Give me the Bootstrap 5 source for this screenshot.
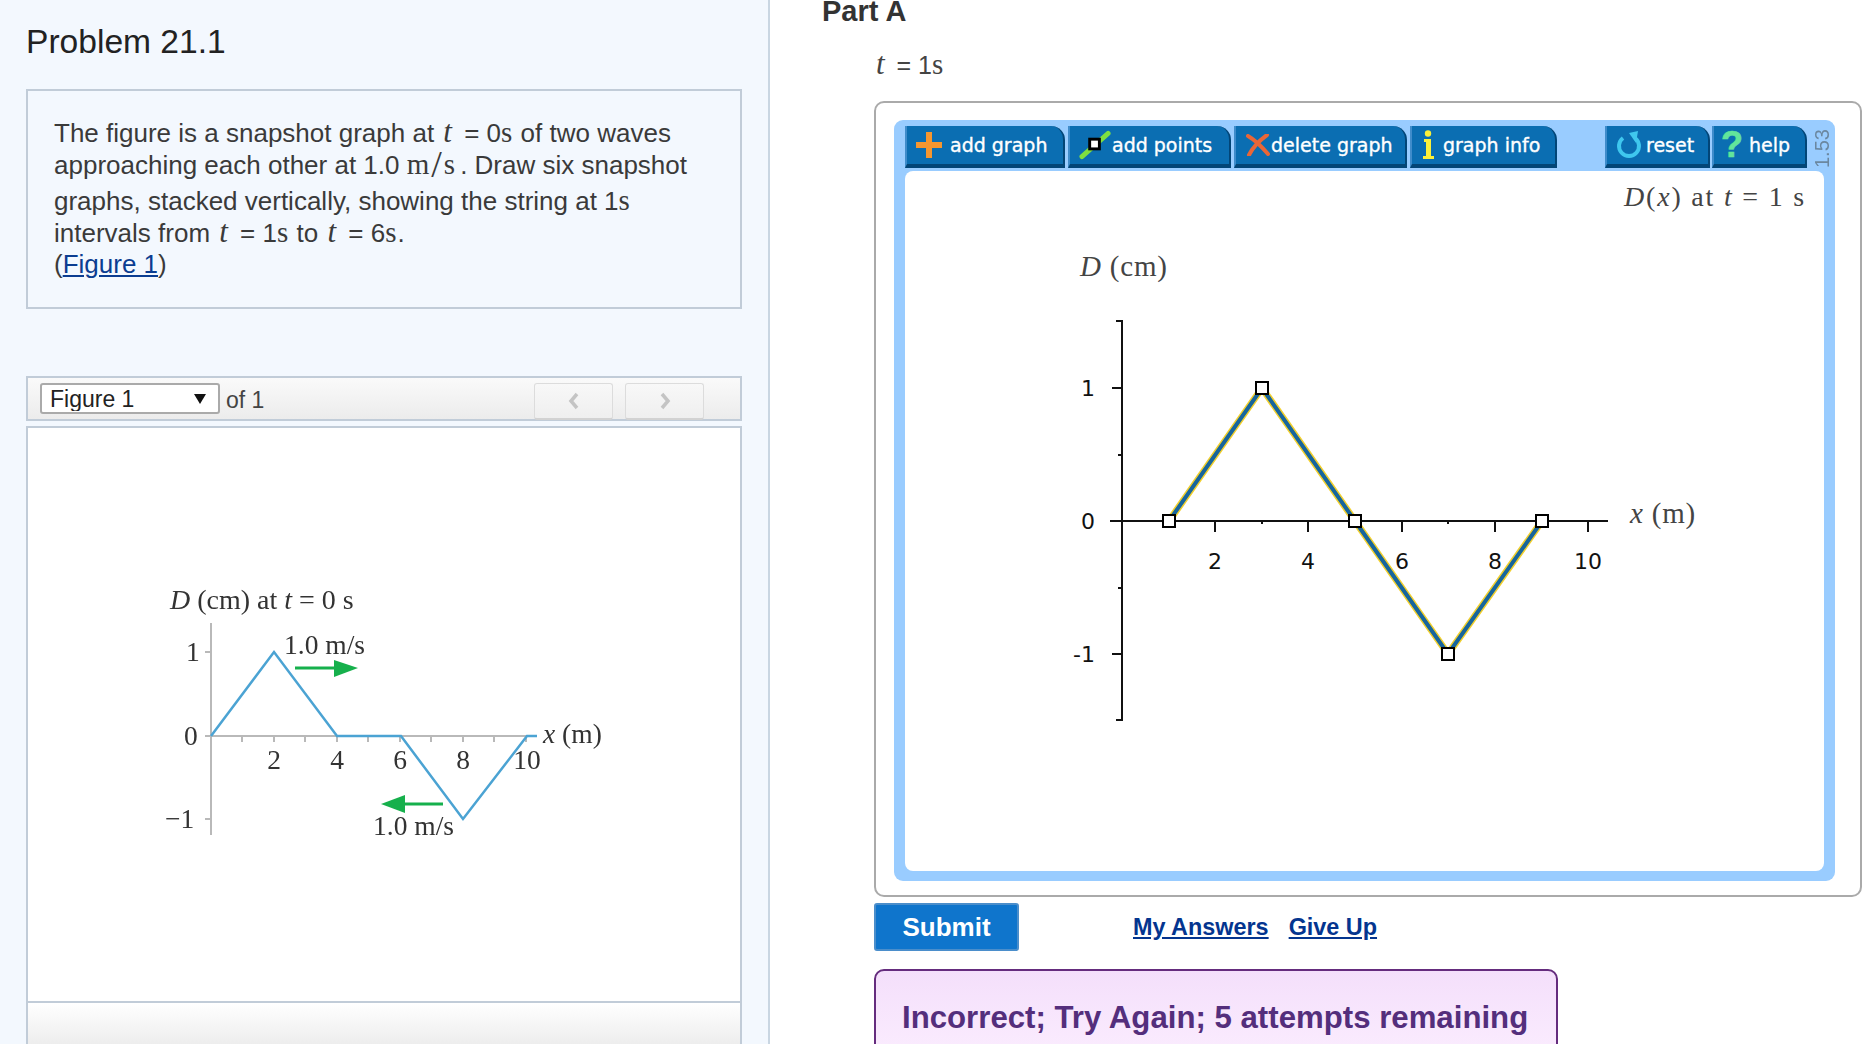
<!DOCTYPE html>
<html lang="en">
<head>
  <meta charset="UTF-8" />
  <meta name="viewport" content="width=device-width, initial-scale=1.0" />
  <title>Problem 21.1</title>
  <link rel="stylesheet" href="https://cdn.jsdelivr.net/npm/bootstrap@5.3.3/dist/css/bootstrap.min.css" />
  <style>
    html, body { height:100%; overflow:hidden; }
    body { font-family:"Liberation Sans", Arial, sans-serif; background:#fff; color:#333; }
    .page-wrap { width:1874px; height:1044px; overflow:hidden; }

    .left-pane { width:770px; height:1044px; flex:none; background:#f3f8fe; border-right:2px solid #c9d6e2; padding:0 26px 0 26px; }
    .prob-title { font-size:33.6px; font-weight:400; line-height:38px; color:#222; margin:23px 0 28px; }
    .prob-box { height:220px; border:2px solid #c1ccd8; padding:25px 26px 0; font-size:26px; margin-bottom:67px; color:#3a3a3a; }
    .prob-line { line-height:32px; height:32px; }
    .mth { font-family:"Liberation Serif", serif; font-size:29px; letter-spacing:1px; }
    i.mth { margin-right:4px; margin-left:2px; font-size:31px; }
    .unit-mth { letter-spacing:2px; margin-right:3px; }
    .big-slash { font-size:38px; font-weight:300; vertical-align:-3px; line-height:0; }
    .prob-box a, .link-fig { color:#0b3d91; }

    .fig-bar { height:45px; border:2px solid #c1ccd8; background:linear-gradient(#fafafa,#ececec); padding:5px 0 0 12px; }
    .fig-select { width:180px; height:31px; font-size:23px; line-height:1; padding:1px 0 0 8px; border:2px solid #aaa; border-radius:3px; color:#222; background-color:#fff; font-family:"Liberation Sans", Arial, sans-serif; background-size:14px 12px; background-position:right 11px center; background-image:url("data:image/svg+xml,%3Csvg xmlns='http://www.w3.org/2000/svg' viewBox='0 0 14 12'%3E%3Cpath d='M1 1h12L7 11z' fill='%23111'/%3E%3C/svg%3E"); }
    .fig-of { font-size:23px; margin-left:6px; color:#444; }
    .pager-group { gap:12px; margin-right:36px; }
    .pager-btn { width:79px; height:37px; padding:0; border:1px solid #dcdcdc; border-bottom:2px solid #d2d2d2; border-radius:3px; background:linear-gradient(#f8f8f8,#efefef); display:flex; align-items:center; justify-content:center; }
    .fig-view { height:575px; margin-top:5px; border:2px solid #c1ccd8; border-bottom:0; background:#fff; }
    .fig-art { filter:blur(.45px); display:block; }
    .fig-foot { height:46px; border:2px solid #c1ccd8; border-bottom:0; background:linear-gradient(#fff,#ececec); }

    .right-pane { flex:1; min-width:0; background:#fff; padding-left:104px; }
    .part-head { font-size:29px; font-weight:700; line-height:22px; color:#333; margin:0 0 0 -52px; }
    .prompt-line { font-size:25px; line-height:30px; margin-top:27px; height:32px; color:#444; }
    .applet-frame { width:988px; height:796px; margin-top:20px; border:2px solid #aaa; border-radius:10px; padding:17px 0 0 18px; background:#fff; }
    .applet-shell { width:941px; height:761px; background:#99ccff; border-radius:9px; padding:6px 10px 10px 11px; }
    .tool-row { height:45px; margin-right:-10px; }
    .tool-btn { height:42px; padding:0 0 0 1px; border:0; border-bottom:4px solid #024577; border-left:2px solid #3f8ccb; border-right:2px solid #024577; border-radius:0 14px 0 0; background:#0b6eb2; color:#fff; font-family:"DejaVu Sans", Verdana, sans-serif; font-size:19px; -webkit-text-stroke:.35px #fff; display:flex; align-items:center; line-height:1; }
    .tool-btn:hover { background:#0b6eb2; color:#fff; }
    .tool-gap { margin-right:3px; }
    .tool-gap-sm { margin-right:2px; }
    .w-add { width:160px; } .w-pts { width:163px; } .w-del { width:173px; } .w-inf { width:147px; } .w-rst { width:105px; } .w-hlp { width:95px; }
    .help-mark { font-family:"Liberation Sans", sans-serif; font-size:36px; font-weight:700; color:#62e59b; -webkit-text-stroke:.6px #62e59b; margin:0 6px 0 6px; }
    .ver-tag { width:18px; margin:0 4px 0 6px; writing-mode:vertical-rl; transform:rotate(180deg); font-size:20px; color:#6b87a0; text-align:left; line-height:18px; height:42px; }
    .draw-area { width:919px; height:700px; background:#fff; border-radius:8px; display:block; }

    .act-row { margin-top:6px; height:48px; }
    .submit-btn { width:145px; height:48px; background:#0f75cc; border:2px solid #4b8ecb; border-radius:3px; font-size:26px; font-weight:700; color:#fff; padding:0; }
    .submit-btn:hover { background:#0f75cc; color:#fff; }
    .act-link { font-size:23.4px; font-weight:700; color:#04358f; }
    .act-links { margin-left:114px; gap:20px; margin-top:2px; }
    .feedback-box { width:684px; height:120px; margin-top:18px; border:2px solid #652c7e; border-radius:10px 10px 0 0; background:linear-gradient(#f4dffb,#fdf1ff); padding:27px 0 0 26px; font-size:31.2px; font-weight:700; color:#542e7c; line-height:40px; }

    .g-title { font-family:"Liberation Serif", serif; font-size:28px; letter-spacing:1.8px; fill:#444; }
    .g-tick { font-family:"DejaVu Sans", Verdana, sans-serif; font-size:22px; fill:#111; }
    .g-lab { font-family:"Liberation Serif", serif; font-size:29px; letter-spacing:.8px; fill:#444; }
    .f-txt { font-family:"Liberation Serif", serif; font-size:27.5px; fill:#333; }
    .f-title { font-size:28px; }
  </style>
</head>
<body>
  <div class="page-wrap d-flex">
    <div class="left-pane">
      <h2 class="prob-title">Problem 21.1</h2>
      <div class="prob-box">
        <div class="prob-line">The figure is a snapshot graph at <i class="mth">t</i> = 0<span class="mth">s</span> of two waves</div>
        <div class="prob-line">approaching each other at 1.0 <span class="mth unit-mth">m<span class="big-slash">/</span>s</span>. Draw six snapshot</div>
        <div class="prob-line mt-1">graphs, stacked vertically, showing the string at 1<span class="mth">s</span></div>
        <div class="prob-line">intervals from <i class="mth">t</i> = 1<span class="mth">s</span> to <i class="mth">t</i> = 6<span class="mth">s</span>.</div>
        <div class="prob-line">(<a href="#" class="link-fig">Figure 1</a>)</div>
      </div>

      <div class="fig-bar d-flex">
        <select class="form-select fig-select"><option>Figure 1</option></select>
        <span class="fig-of">of 1</span>
        <div class="pager-group d-flex ms-auto">
          <button class="btn pager-btn" type="button" aria-label="Previous"><svg width="12" height="18" viewBox="0 0 12 18"><path d="M9 2 3 9l6 7" fill="none" stroke="#c4c4c4" stroke-width="3.5"/></svg></button>
          <button class="btn pager-btn" type="button" aria-label="Next"><svg width="12" height="18" viewBox="0 0 12 18"><path d="M3 2l6 7-6 7" fill="none" stroke="#c4c4c4" stroke-width="3.5"/></svg></button>
        </div>
      </div>

      <div class="fig-view">
        <svg class="fig-art" width="711" height="573" viewBox="28 428 711 573">
          <text class="f-txt f-title" x="170" y="609"><tspan font-style="italic">D</tspan> (cm) at <tspan font-style="italic">t</tspan> = 0 s</text>
          <g stroke="#b9b9b9" stroke-width="2" fill="none">
            <path d="M211 623V835M211 736H537"/>
            <path d="M205 652h6M205 819h6M205 736h6M242 736v6M274 736v6M305 736v6M337 736v6M368 736v6M400 736v6M431 736v6M463 736v6M494 736v6M526 736v6"/>
          </g>
          <path d="M211 736 274 652 337 736H401L463 819 527 736H537" fill="none" stroke="#4ba3d3" stroke-width="2.5"/>
          <text class="f-txt" x="186" y="661">1</text>
          <text class="f-txt" x="184" y="745">0</text>
          <text class="f-txt" x="165" y="828">−1</text>
          <text class="f-txt" text-anchor="middle" x="274" y="769">2</text>
          <text class="f-txt" text-anchor="middle" x="337" y="769">4</text>
          <text class="f-txt" text-anchor="middle" x="400" y="769">6</text>
          <text class="f-txt" text-anchor="middle" x="463" y="769">8</text>
          <text class="f-txt" text-anchor="middle" x="527" y="769">10</text>
          <text class="f-txt" x="284" y="654">1.0 m/s</text>
          <text class="f-txt" x="373" y="835">1.0 m/s</text>
          <text class="f-txt" x="543" y="743"><tspan font-style="italic">x</tspan> (m)</text>
          <path d="M295 668h40" stroke="#16b04c" stroke-width="3"/>
          <path d="M334 660 358 668 334 677z" fill="#16b04c"/>
          <path d="M443 804h-40" stroke="#16b04c" stroke-width="3"/>
          <path d="M405 795 381 804 405 813z" fill="#16b04c"/>
        </svg>
      </div>
      <div class="fig-foot"></div>
    </div>

    <div class="right-pane">
      <div class="part-head">Part A</div>
      <div class="prompt-line"><i class="mth">t</i> = 1<span class="mth">s</span></div>

      <div class="applet-frame">
        <div class="applet-shell">
          <div class="tool-row d-flex">
            <button class="btn tool-btn tool-gap w-add" type="button">
              <svg class="mx-2" width="26" height="26" viewBox="0 0 26 26"><path d="M10 0h6v10h10v6H16v10h-6V16H0v-6h10z" fill="#f6962f"/></svg>add graph</button>
            <button class="btn tool-btn tool-gap w-pts" type="button">
              <svg class="ms-2" width="33" height="30" viewBox="0 0 34 30"><path d="M3 27 30 3" stroke="#7fe040" stroke-width="5" stroke-linecap="round"/><rect x="11" y="9" width="10" height="10" fill="#fff" stroke="#000" stroke-width="3"/></svg>add points</button>
            <button class="btn tool-btn tool-gap w-del" type="button">
              <svg class="ms-2" width="26" height="22" viewBox="0 0 24 22"><path d="M2 2c7 4 14 11 20 18M21 1C14 6 7 13 3 21" fill="none" stroke="#ea6637" stroke-width="4" stroke-linecap="round"/></svg>delete graph</button>
            <button class="btn tool-btn w-inf" type="button">
              <svg class="ms-2 me-2" width="14" height="30" viewBox="0 0 14 30"><circle cx="7" cy="3.5" r="3.2" fill="#fbf03a"/><path d="M3 9h7v17h3v3H2v-3h3V12H3z" fill="#fbf03a"/></svg>graph info</button>
            <div class="d-flex ms-auto">
              <button class="btn tool-btn tool-gap-sm w-rst" type="button">
                <svg class="ms-2 me-1" width="26" height="28" viewBox="0 0 26 28"><path d="M7 7A10 10 0 1 0 19 7" fill="none" stroke="#3fc7ee" stroke-width="4"/><path d="M13 2 22 0 20 12z" fill="#3fc7ee"/></svg>reset</button>
              <button class="btn tool-btn w-hlp" type="button"><span class="help-mark">?</span>help</button>
            </div>
            <span class="ver-tag">1.53</span>
          </div>
          <svg class="draw-area" viewBox="905 170 919 700">
            <text class="g-title" x="1806" y="205" text-anchor="end"><tspan font-style="italic">D</tspan>(<tspan font-style="italic">x</tspan>) at <tspan font-style="italic">t</tspan> = 1 s</text>
            <text class="g-lab" x="1080" y="275"><tspan font-style="italic">D</tspan> (cm)</text>
            <text class="g-lab" x="1630" y="522"><tspan font-style="italic">x</tspan> (m)</text>
            <g stroke="#111" stroke-width="2" fill="none">
              <path d="M1116 320h6V719h-6M1110 520H1608"/>
              <path d="M1112 387h10M1112 653h10M1118 454h4M1118 587h4"/>
              <path d="M1215 520v11M1308 520v11M1402 520v11M1495 520v11M1588 520v11M1169 520v3M1262 520v3M1355 520v3M1448 520v3M1542 520v3"/>
            </g>
            <path d="M1169 520 1262 387 1355 520 1448 653 1542 520" fill="none" stroke="#f1cf2e" stroke-width="7"/>
            <path d="M1169 520 1262 387 1355 520 1448 653 1542 520" fill="none" stroke="#17659c" stroke-width="4"/>
            <g fill="#fff" stroke="#000" stroke-width="2">
              <rect x="1163" y="514" width="12" height="12"/>
              <rect x="1256" y="381" width="12" height="12"/>
              <rect x="1349" y="514" width="12" height="12"/>
              <rect x="1442" y="647" width="12" height="12"/>
              <rect x="1536" y="514" width="12" height="12"/>
            </g>
            <text class="g-tick" x="1095" y="395" text-anchor="end">1</text>
            <text class="g-tick" x="1095" y="528" text-anchor="end">0</text>
            <text class="g-tick" x="1095" y="661" text-anchor="end">-1</text>
            <text class="g-tick" x="1215" y="568" text-anchor="middle">2</text>
            <text class="g-tick" x="1308" y="568" text-anchor="middle">4</text>
            <text class="g-tick" x="1402" y="568" text-anchor="middle">6</text>
            <text class="g-tick" x="1495" y="568" text-anchor="middle">8</text>
            <text class="g-tick" x="1588" y="568" text-anchor="middle">10</text>
          </svg>
        </div>
      </div>

      <div class="act-row d-flex">
        <button class="btn submit-btn" type="button">Submit</button>
        <div class="act-links d-flex align-items-center">
          <a href="#" class="act-link">My Answers</a>
          <a href="#" class="act-link">Give Up</a>
        </div>
      </div>

      <div class="feedback-box">Incorrect; Try Again; 5 attempts remaining</div>
    </div>
  </div>
  <script src="https://cdn.jsdelivr.net/npm/bootstrap@5.3.3/dist/js/bootstrap.bundle.min.js"></script>
</body>
</html>
